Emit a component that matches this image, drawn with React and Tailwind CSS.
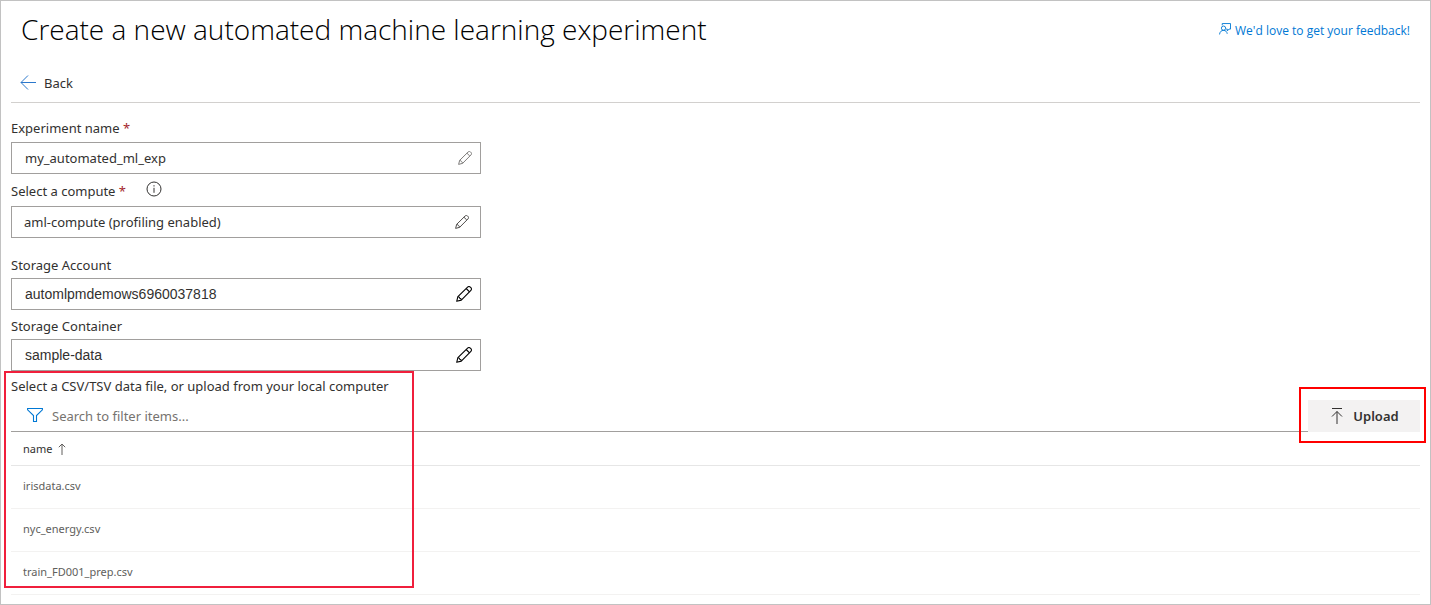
import React from "react";

function PencilIcon({ className }) {
  return (
    <svg viewBox="0 0 16 16" fill="none" stroke="currentColor" strokeWidth="1.1" strokeLinejoin="round" className={className} aria-hidden="true">
      <path d="M.7 15.3l1.2-4.6L11.6 1.1a1.9 1.9 0 0 1 2.7 0l.6.6a1.9 1.9 0 0 1 0 2.7L5.3 14.1z" />
      <path d="M10.2 2.5l3.3 3.3M1.9 10.7c1.3 0 1.8.5 1.8 1.6 1.1 0 1.6.6 1.6 1.8" />
    </svg>
  );
}

function InfoIcon() {
  return (
    <svg viewBox="0 0 16 16" className="size-4" fill="none" stroke="#323130" aria-hidden="true">
      <circle cx="8" cy="8" r="7" />
      <path d="M8 6.8v5M8 4.2v1.3" />
    </svg>
  );
}

function Field({ id, label, required, info, value, textClass, iconClass, labelClass, padClass }) {
  return (
    <div className="flex max-w-[470px] flex-col">
      <div className={`flex items-start ${labelClass}`}>
        <label htmlFor={id} className="text-[13px] leading-5">
          {label}
          {required && <span className="text-[#a4262c]"> *</span>}
        </label>
        {info && (
          <button type="button" aria-label="About compute" className="ml-5">
            <InfoIcon />
          </button>
        )}
      </div>
      <div className={`flex h-8 items-center border border-[#a19f9d] ${padClass}`}>
        <input id={id} type="text" defaultValue={value} className={`min-w-0 flex-1 bg-transparent outline-none ${textClass}`} />
        <button type="button" aria-label={`Edit ${label}`}>
          <PencilIcon className={iconClass} />
        </button>
      </div>
    </div>
  );
}

const files = ["irisdata.csv", "nyc_energy.csv", "train_FD001_prep.csv"];

export default function App() {
  return (
    <main className="min-h-screen border border-[#c2c2c2] bg-white px-2.5 pb-2 font-['Noto_Sans','Open_Sans',sans-serif] text-[#323130]">
      <header className="flex h-15 items-center justify-between px-2.5">
        <h1 className="pb-1 font-['Open_Sans','Noto_Sans',sans-serif] text-[28px] leading-9 font-light text-black">
          Create a new automated machine learning experiment
        </h1>
        <a href="#feedback" className="flex items-center gap-1 font-['Open_Sans','Noto_Sans',sans-serif] text-xs leading-4 text-[#0078d4]">
          <svg viewBox="0 0 13 13" className="mb-1 size-3" fill="none" stroke="currentColor" aria-hidden="true">
            <path d="M3.500 2.500V.6h9v6h-1.600L9 8.600v-2H7.800" />
            <circle cx="4.900" cy="5.600" r="2.300" />
            <path d="M.6 12.400c.2-2.800 1.900-4.400 4.300-4.400s3.700 1.500 4 3.700" />
          </svg>
          We'd love to get your feedback!
        </a>
      </header>

      <nav className="flex h-[42px] items-center border-b border-[#d2d0ce] px-[9px]">
        <button type="button" className="flex items-center gap-2 text-[13px] leading-5">
          <svg viewBox="0 0 16 16" className="size-4" fill="none" stroke="#2b78cc" aria-hidden="true">
            <path d="M16 8.500H1M8 1.500L1 8.500l7 7" />
          </svg>
          <span className="pt-0.5">Back</span>
        </button>
      </nav>

      <form className="pt-[15px]" onSubmit={(e) => e.preventDefault()}>
        <Field id="experiment" label="Experiment name" required value="my_automated_ml_exp" textClass="pt-0.5 text-[13px]" labelClass="h-6" padClass="pr-2 pl-[13px]" iconClass="size-[14px] text-[#797775]" />
        <Field id="compute" label="Select a compute" required info value="aml-compute (profiling enabled)" textClass="pt-0.5 text-[13px]" labelClass="h-8 pt-[7px]" padClass="pr-[11px] pl-3" iconClass="size-[14px] text-[#484644]" />
        <Field id="account" label="Storage Account" value="automlpmdemows6960037818" textClass="font-['Liberation_Sans',sans-serif] text-sm" labelClass="h-10 pt-[17px]" padClass="pr-2 pl-[13px]" iconClass="size-4 text-black" />
        <Field id="container" label="Storage Container" value="sample-data" textClass="font-['Liberation_Sans',sans-serif] text-sm" labelClass="h-[29px] pt-1.5" padClass="pr-2 pl-[13px]" iconClass="size-4 text-black" />
      </form>

      <section className="relative pt-[5px]">
        <label htmlFor="filter" className="block h-6 text-[13px] leading-5">
          Select a CSV/TSV data file, or upload from your local computer
        </label>
        <div className="flex h-8">
          <div className="flex flex-1 items-center gap-[9px] border-b border-[#a19f9d] pl-4">
            <svg viewBox="0 0 16 16" className="size-4" fill="none" stroke="#0078d4" strokeWidth="1.1" aria-hidden="true">
              <path d="M.6.5h14.800v1.300L9.500 7.500V13.500h-3V7.500L.6 1.800z" />
            </svg>
            <input id="filter" type="text" placeholder="Search to filter items..." className="min-w-0 flex-1 pt-0.5 text-[13px] outline-none placeholder:text-[#76736f]" />
          </div>
          <div className="relative">
            <button type="button" className="flex h-8 w-28 items-center justify-center gap-2 bg-[#f3f2f2] text-[13px] font-semibold">
              <svg viewBox="0 0 16 16" className="size-4" fill="none" stroke="#323130" aria-hidden="true">
                <path d="M3 .5h10M8 16V3.500M3 8.500l5-5 5 5" />
              </svg>
              <span className="pt-0.5">Upload</span>
            </button>
            <div className="pointer-events-none absolute -top-[13px] -right-1.5 -bottom-[11px] -left-[9px] border-2 border-[#ff0000]" />
          </div>
        </div>

        <table className="w-full border-separate border-spacing-0 text-left">
          <thead>
            <tr>
              <th scope="col" className="h-[34px] border-b border-[#e6e6e6] p-0 pl-3 text-[11px] font-normal">
                <button type="button" className="flex items-center gap-1.5">
                  <span className="pt-0.5">name</span>
                  <svg viewBox="0 0 8 12" className="h-3 w-2" fill="none" stroke="#605e5c" aria-hidden="true">
                    <path d="M4 12V1M.8 4.200L4 1l3.200 3.200" />
                  </svg>
                </button>
              </th>
            </tr>
          </thead>
          <tbody>
            {files.map((name) => (
              <tr key={name}>
                <td className="h-[43px] border-b border-[#f3f2f1] p-0 pb-0.5 pl-3 text-[11px] text-[#605e5c]">{name}</td>
              </tr>
            ))}
          </tbody>
        </table>
        <div className="pointer-events-none absolute top-0 bottom-[7px] -left-[7px] w-[410px] border-2 border-[#f01f3c]" />
      </section>
    </main>
  );
}
